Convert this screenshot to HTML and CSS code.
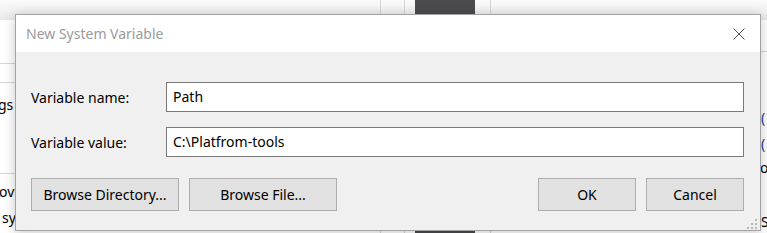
FILE: index.html
```html
<!DOCTYPE html>
<html>
<head>
<meta charset="utf-8">
<link rel="stylesheet" href="styles.css">
</head>
<body>
<div class="backdrop">
  <div class="topstrip"></div>
  <div class="vline v1"></div>
  <div class="vline v2"></div>
  <div class="vline v3"></div>
  <div class="darkcol"></div>
  <div class="hline h1"></div>
  <div class="hline h2"></div>
  <div class="hline h3"></div>
  <div class="hline h4"></div>
  <span class="snip s1">gs <span class="pur">r</span></span>
  <span class="snip s2">ov</span>
  <span class="snip s3">sy</span>
  <span class="snip s4">(</span>
  <span class="snip s5">(</span>
  <span class="snip s6">o</span>
  <span class="snip s7">S</span>
</div>

<div class="dialog">
  <div class="titlebar">
    <span class="title">New System Variable</span>
    <svg class="close" width="12" height="12" viewBox="0 0 12 12">
      <path d="M0.5 0.5 L11.5 11.5 M11.5 0.5 L0.5 11.5" stroke="#555" stroke-width="1" fill="none"/>
    </svg>
  </div>
  <div class="body">
    <div class="row">
      <label class="label">Variable name:</label>
      <div class="input">Path</div>
    </div>
    <div class="row">
      <label class="label">Variable value:</label>
      <div class="input">C:\Platfrom-tools</div>
    </div>
    <div class="buttons">
      <button class="btn wide">Browse Directory...</button>
      <button class="btn wide">Browse File...</button>
      <div class="spacer"></div>
      <button class="btn">OK</button>
      <button class="btn">Cancel</button>
    </div>
    <svg class="grip" width="10" height="10" viewBox="0 0 10 10">
      <rect x="8" y="0" width="2" height="2" fill="#b8b8b8"/>
      <rect x="4" y="4" width="2" height="2" fill="#b8b8b8"/>
      <rect x="8" y="4" width="2" height="2" fill="#b8b8b8"/>
      <rect x="0" y="8" width="2" height="2" fill="#b8b8b8"/>
      <rect x="4" y="8" width="2" height="2" fill="#b8b8b8"/>
      <rect x="8" y="8" width="2" height="2" fill="#b8b8b8"/>
    </svg>
  </div>
</div>
</body>
</html>
```

FILE: styles.css
```css
html, body {
  margin: 0;
  padding: 0;
}
body {
  width: 767px;
  height: 233px;
  overflow: hidden;
  background: #ffffff;
  font-family: "Noto Sans", "Open Sans", sans-serif;
  position: relative;
}

.backdrop {
  position: absolute;
  inset: 0;
}
.topstrip {
  position: absolute;
  left: 0;
  top: 0;
  width: 767px;
  height: 20px;
  background: linear-gradient(#fbfbfb, #e9e9e9);
}
.vline {
  position: absolute;
  top: 0;
  width: 1px;
  height: 233px;
  background: #d4d4d4;
}
.v1 { left: 380px; }
.v2 { left: 404px; }
.v3 { left: 490px; }
.darkcol {
  position: absolute;
  left: 415px;
  top: 0;
  width: 60px;
  height: 233px;
  background: #4b4b4e;
}
.hline {
  position: absolute;
  height: 1px;
  background: #d8d8d8;
}
.h1 { left: 0; width: 16px; top: 63px; }
.h2 { left: 0; width: 16px; top: 82px; }
.h3 { left: 0; width: 16px; top: 173px; }
.h4 { left: 760px; width: 7px; top: 51px; }
.snip {
  position: absolute;
  font-size: 14px;
  color: #000;
  line-height: 16px;
}
.pur { color: #6a1b9a; }
.s1 { left: -2px; top: 97px; }
.s2 { left: -1px; top: 184px; }
.s3 { left: 2px; top: 210px; }
.s4 { left: 761px; top: 110px; color: #1a3a9a; }
.s5 { left: 761px; top: 136px; color: #1a3a9a; }
.s6 { left: 760px; top: 160px; }
.s7 { left: 761px; top: 214px; }

.dialog {
  position: absolute;
  left: 15px;
  top: 14px;
  width: 744px;
  height: 215px;
  border: 1px solid #a3a3a3;
  background: #f0f0f0;
  box-shadow: 0 2px 12px rgba(0, 0, 0, 0.22);
  display: flex;
  flex-direction: column;
}
.titlebar {
  height: 37px;
  background: #ffffff;
  display: flex;
  align-items: center;
  padding: 0 15px 0 10px;
}
.title {
  flex: 1;
  font-size: 14px;
  color: #9b9b9b;
  padding-bottom: 1px;
}
.close {
  display: block;
  margin-top: 1px;
}

.body {
  flex: 1;
  position: relative;
  padding: 30px 16px 0 15px;
  display: flex;
  flex-direction: column;
  gap: 15px;
}
.row {
  display: flex;
  align-items: center;
}
.label {
  width: 135px;
  font-size: 14px;
  color: #000;
}
.input {
  flex: 1;
  height: 28px;
  border: 1px solid #7a7a7a;
  background: #ffffff;
  font-size: 14px;
  line-height: 28px;
  padding-left: 6px;
  color: #000;
}
.buttons {
  display: flex;
  gap: 10px;
  margin-top: 6px;
}
.spacer { flex: 1; }
.btn {
  width: 98px;
  height: 33px;
  background: #e1e1e1;
  border: 1px solid #adadad;
  font-family: "Noto Sans", "Open Sans", sans-serif;
  font-size: 14px;
  color: #000;
  padding: 0;
}
.btn.wide { width: 148px; }
.grip {
  position: absolute;
  right: 3px;
  bottom: 1px;
}
```
